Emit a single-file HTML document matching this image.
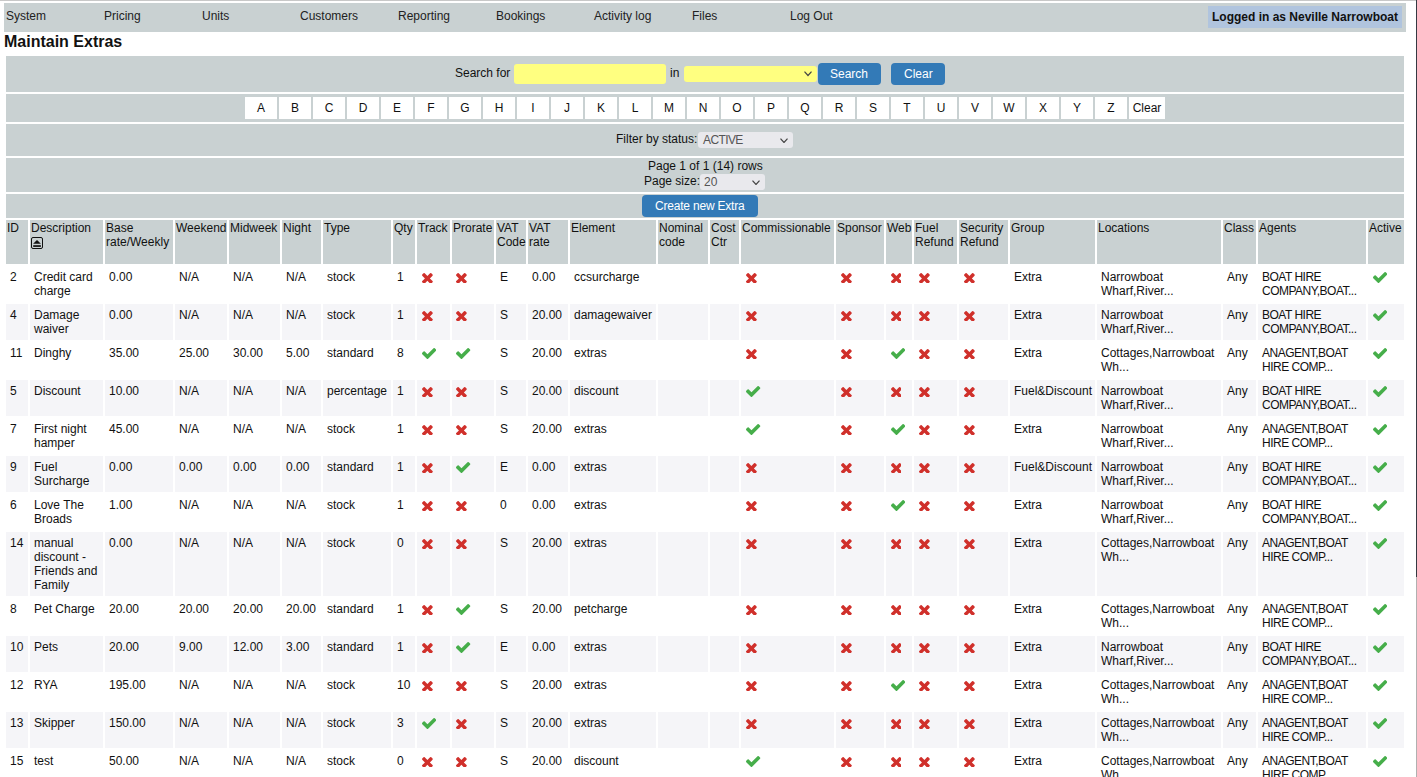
<!DOCTYPE html>
<html><head><meta charset="utf-8"><title>Maintain Extras</title>
<style>
html,body{margin:0;padding:0;background:#fff;}
body{width:1417px;height:777px;overflow:hidden;position:relative;font-family:"Liberation Sans",sans-serif;font-size:12px;color:#111;}
.a{position:absolute;}
.t{position:absolute;line-height:14px;white-space:nowrap;}
.g{background:#c9d1d2;}
.hd{position:absolute;background:#c9d1d2;box-sizing:border-box;padding:1px 1px;line-height:14px;white-space:nowrap;color:#111;}
.cd{position:absolute;box-sizing:border-box;padding:4px 4px;line-height:14px;white-space:nowrap;color:#111;}
.alt{background:#f5f5f8;}
.ic{position:absolute;}
.ej{position:absolute;left:1px;top:17px;}
.btn{position:absolute;background:#337ab7;border-radius:4px;color:#fff;}
.lt{position:absolute;background:#fff;width:32px;height:22px;text-align:center;line-height:14px;box-sizing:border-box;padding-top:4px;}
.sel{position:absolute;background:#e9e9ed;border-radius:3px;color:#555;}
</style></head><body>

<svg width='0' height='0' style='position:absolute'><defs><path id='ix' fill='#d0302b' d='M1298 1322q0 40-28 68l-136 136q-28 28-68 28t-68-28l-294-294-294 294q-28 28-68 28t-68-28l-136-136q-28-28-28-68t28-68l294-294-294-294q-28-28-28-68t28-68l136-136q28-28 68-28t68 28l294 294 294-294q28-28 68-28t68 28l136 136q28 28 28 68t-28 68l-294 294 294 294q28 28 28 68z'/><path id='ic' fill='#46ae4a' d='M1671 566q0 40-28 68l-724 724-136 136q-28 28-68 28t-68-28l-136-136-362-362q-28-28-28-68t28-68l136-136q28-28 68-28t68 28l294 295 656-657q28-28 68-28t68 28l136 136q28 28 28 68z'/></defs></svg>
<div class='a' style='left:0;top:0;width:1416px;height:1px;background:#c8c8c8'></div>
<div class='a' style='left:1416px;top:0;width:1px;height:577px;background:#353942'></div>
<div class='a' style='left:1416px;top:577px;width:1px;height:200px;background:#b0b0b0'></div>
<div class='a g' style='left:4px;top:3px;width:1402px;height:29px'></div>
<div class='t' style='left:6px;top:9px;color:#222'>System</div>
<div class='t' style='left:104px;top:9px;color:#222'>Pricing</div>
<div class='t' style='left:202px;top:9px;color:#222'>Units</div>
<div class='t' style='left:300px;top:9px;color:#222'>Customers</div>
<div class='t' style='left:398px;top:9px;color:#222'>Reporting</div>
<div class='t' style='left:496px;top:9px;color:#222'>Bookings</div>
<div class='t' style='left:594px;top:9px;color:#222'>Activity log</div>
<div class='t' style='left:692px;top:9px;color:#222'>Files</div>
<div class='t' style='left:790px;top:9px;color:#222'>Log Out</div>
<div class='a' style='left:1208px;top:6px;width:194px;height:22px;background:#b0c4de'></div>
<div class='t' style='left:1212px;top:10px;font-weight:bold;color:#111'>Logged in as Neville Narrowboat</div>
<div class='a' style='left:4px;top:32px;font-weight:bold;font-size:16px;line-height:19px;color:#111'>Maintain Extras</div>
<div class='a g' style='left:6px;top:56px;width:1398px;height:36px'></div>
<div class='a g' style='left:6px;top:94px;width:1398px;height:28px'></div>
<div class='a g' style='left:6px;top:124px;width:1398px;height:32px'></div>
<div class='a g' style='left:6px;top:158px;width:1398px;height:34px'></div>
<div class='a g' style='left:6px;top:194px;width:1398px;height:24px'></div>
<div class='t' style='left:455px;top:66px'>Search for</div>
<div class='a' style='left:514px;top:64px;width:152px;height:20px;background:#ffff80;border-radius:3px'></div>
<div class='t' style='left:670px;top:66px'>in</div>
<div class='a' style='left:684px;top:66px;width:133px;height:16px;background:#ffff80;border-radius:3px'></div>
<svg class='a' style='left:804.2px;top:71.3px' width='8' height='5.5' viewBox='0 0 8 5.5'><path d='M0.5 0.6L4 4.5L7.5 0.6' stroke='#444' stroke-width='1.2' fill='none'/></svg>
<div class='btn' style='left:818px;top:63px;width:63px;height:22px'></div>
<div class='t' style='left:830px;top:67px;color:#fff'>Search</div>
<div class='btn' style='left:891px;top:63px;width:54px;height:22px'></div>
<div class='t' style='left:904px;top:67px;color:#fff'>Clear</div>
<div class='lt' style='left:245px;top:97px'>A</div>
<div class='lt' style='left:279px;top:97px'>B</div>
<div class='lt' style='left:313px;top:97px'>C</div>
<div class='lt' style='left:347px;top:97px'>D</div>
<div class='lt' style='left:381px;top:97px'>E</div>
<div class='lt' style='left:415px;top:97px'>F</div>
<div class='lt' style='left:449px;top:97px'>G</div>
<div class='lt' style='left:483px;top:97px'>H</div>
<div class='lt' style='left:517px;top:97px'>I</div>
<div class='lt' style='left:551px;top:97px'>J</div>
<div class='lt' style='left:585px;top:97px'>K</div>
<div class='lt' style='left:619px;top:97px'>L</div>
<div class='lt' style='left:653px;top:97px'>M</div>
<div class='lt' style='left:687px;top:97px'>N</div>
<div class='lt' style='left:721px;top:97px'>O</div>
<div class='lt' style='left:755px;top:97px'>P</div>
<div class='lt' style='left:789px;top:97px'>Q</div>
<div class='lt' style='left:823px;top:97px'>R</div>
<div class='lt' style='left:857px;top:97px'>S</div>
<div class='lt' style='left:891px;top:97px'>T</div>
<div class='lt' style='left:925px;top:97px'>U</div>
<div class='lt' style='left:959px;top:97px'>V</div>
<div class='lt' style='left:993px;top:97px'>W</div>
<div class='lt' style='left:1027px;top:97px'>X</div>
<div class='lt' style='left:1061px;top:97px'>Y</div>
<div class='lt' style='left:1095px;top:97px'>Z</div>
<div class='lt' style='left:1129px;top:97px;width:36px'>Clear</div>
<div class='t' style='left:616px;top:132px'>Filter by status:</div>
<div class='sel' style='left:698px;top:132px;width:95px;height:16px'></div>
<div class='t' style='left:703px;top:133px;color:#555;letter-spacing:-0.6px'>ACTIVE</div>
<svg class='a' style='left:779.8px;top:137.6px' width='8' height='5.5' viewBox='0 0 8 5.5'><path d='M0.5 0.6L4 4.5L7.5 0.6' stroke='#444' stroke-width='1.2' fill='none'/></svg>
<div class='t' style='left:648px;top:159px'>Page 1 of 1 (14) rows</div>
<div class='t' style='left:644px;top:174px'>Page size:</div>
<div class='sel' style='left:700px;top:174px;width:65px;height:16px'></div>
<div class='t' style='left:704px;top:175px;color:#555'>20</div>
<svg class='a' style='left:752px;top:179.6px' width='8' height='5.5' viewBox='0 0 8 5.5'><path d='M0.5 0.6L4 4.5L7.5 0.6' stroke='#444' stroke-width='1.2' fill='none'/></svg>
<div class='btn' style='left:642px;top:195px;width:116px;height:22px'></div>
<div class='t' style='left:655px;top:199px;color:#fff;letter-spacing:-0.2px'>Create new Extra</div>
<div class='hd' style='left:6px;top:220px;width:22px;height:44px'>ID</div>
<div class='hd' style='left:30px;top:220px;width:73px;height:44px'>Description<br><svg class='ej' width='12' height='12' viewBox='0 0 12 12'><rect x='0.5' y='0.5' width='11' height='11' rx='1.5' fill='none' stroke='#111' stroke-width='1'/><path d='M2.1 6.7L6 3L9.9 6.7Z' fill='#111'/><rect x='2.2' y='8.2' width='7.7' height='1.7' fill='#111'/></svg></div>
<div class='hd' style='left:105px;top:220px;width:68px;height:44px'>Base<br>rate/Weekly</div>
<div class='hd' style='left:175px;top:220px;width:52px;height:44px'>Weekend</div>
<div class='hd' style='left:229px;top:220px;width:51px;height:44px'>Midweek</div>
<div class='hd' style='left:282px;top:220px;width:39px;height:44px'>Night</div>
<div class='hd' style='left:323px;top:220px;width:68px;height:44px'>Type</div>
<div class='hd' style='left:393px;top:220px;width:22px;height:44px'>Qty</div>
<div class='hd' style='left:417px;top:220px;width:33px;height:44px'>Track</div>
<div class='hd' style='left:452px;top:220px;width:42px;height:44px'>Prorate</div>
<div class='hd' style='left:496px;top:220px;width:30px;height:44px'>VAT<br>Code</div>
<div class='hd' style='left:528px;top:220px;width:40px;height:44px'>VAT<br>rate</div>
<div class='hd' style='left:570px;top:220px;width:86px;height:44px'>Element</div>
<div class='hd' style='left:658px;top:220px;width:50px;height:44px'>Nominal<br>code</div>
<div class='hd' style='left:710px;top:220px;width:29px;height:44px'>Cost<br>Ctr</div>
<div class='hd' style='left:741px;top:220px;width:93px;height:44px'>Commissionable</div>
<div class='hd' style='left:836px;top:220px;width:48px;height:44px'>Sponsor</div>
<div class='hd' style='left:886px;top:220px;width:26px;height:44px'>Web</div>
<div class='hd' style='left:914px;top:220px;width:43px;height:44px'>Fuel<br>Refund</div>
<div class='hd' style='left:959px;top:220px;width:49px;height:44px'>Security<br>Refund</div>
<div class='hd' style='left:1010px;top:220px;width:85px;height:44px'>Group</div>
<div class='hd' style='left:1097px;top:220px;width:124px;height:44px'>Locations</div>
<div class='hd' style='left:1223px;top:220px;width:33px;height:44px'>Class</div>
<div class='hd' style='left:1258px;top:220px;width:108px;height:44px'>Agents</div>
<div class='hd' style='left:1368px;top:220px;width:36px;height:44px'>Active</div>
<div class='cd' style='left:6px;top:266px;width:22px;height:36px'>2</div>
<div class='cd' style='left:30px;top:266px;width:73px;height:36px'>Credit card<br>charge</div>
<div class='cd' style='left:105px;top:266px;width:68px;height:36px'>0.00</div>
<div class='cd' style='left:175px;top:266px;width:52px;height:36px'>N/A</div>
<div class='cd' style='left:229px;top:266px;width:51px;height:36px'>N/A</div>
<div class='cd' style='left:282px;top:266px;width:39px;height:36px'>N/A</div>
<div class='cd' style='left:323px;top:266px;width:68px;height:36px'>stock</div>
<div class='cd' style='left:393px;top:266px;width:22px;height:36px'>1</div>
<div class='cd' style='left:417px;top:266px;width:33px;height:36px'><span class='ic' style='left:5.00px;top:6.6px'><svg style='display:block' width='10.8' height='10.8' viewBox='110 366 1188 1188'><use href='#ix'/></svg></span></div>
<div class='cd' style='left:452px;top:266px;width:42px;height:36px'><span class='ic' style='left:4.40px;top:6.6px'><svg style='display:block' width='10.8' height='10.8' viewBox='110 366 1188 1188'><use href='#ix'/></svg></span></div>
<div class='cd' style='left:496px;top:266px;width:30px;height:36px'>E</div>
<div class='cd' style='left:528px;top:266px;width:40px;height:36px'>0.00</div>
<div class='cd' style='left:570px;top:266px;width:86px;height:36px'>ccsurcharge</div>
<div class='cd' style='left:658px;top:266px;width:50px;height:36px'></div>
<div class='cd' style='left:710px;top:266px;width:29px;height:36px'></div>
<div class='cd' style='left:741px;top:266px;width:93px;height:36px'><span class='ic' style='left:5.25px;top:6.6px'><svg style='display:block' width='10.8' height='10.8' viewBox='110 366 1188 1188'><use href='#ix'/></svg></span></div>
<div class='cd' style='left:836px;top:266px;width:48px;height:36px'><span class='ic' style='left:5.20px;top:6.6px'><svg style='display:block' width='10.8' height='10.8' viewBox='110 366 1188 1188'><use href='#ix'/></svg></span></div>
<div class='cd' style='left:886px;top:266px;width:26px;height:36px'><span class='ic' style='left:4.70px;top:6.6px'><svg style='display:block' width='10.8' height='10.8' viewBox='110 366 1188 1188'><use href='#ix'/></svg></span></div>
<div class='cd' style='left:914px;top:266px;width:43px;height:36px'><span class='ic' style='left:5.47px;top:6.6px'><svg style='display:block' width='10.8' height='10.8' viewBox='110 366 1188 1188'><use href='#ix'/></svg></span></div>
<div class='cd' style='left:959px;top:266px;width:49px;height:36px'><span class='ic' style='left:5.20px;top:6.6px'><svg style='display:block' width='10.8' height='10.8' viewBox='110 366 1188 1188'><use href='#ix'/></svg></span></div>
<div class='cd' style='left:1010px;top:266px;width:85px;height:36px'>Extra</div>
<div class='cd' style='left:1097px;top:266px;width:124px;height:36px'>Narrowboat<br>Wharf,River...</div>
<div class='cd' style='left:1223px;top:266px;width:33px;height:36px'>Any</div>
<div class='cd' style='left:1258px;top:266px;width:108px;height:36px;letter-spacing:-0.5px'>BOAT HIRE<br>COMPANY,BOAT...</div>
<div class='cd' style='left:1368px;top:266px;width:36px;height:36px'><span class='ic' style='left:5.00px;top:5.9px'><svg style='display:block' width='14.3' height='11' viewBox='121 334 1550 1188'><use href='#ic'/></svg></span></div>
<div class='cd alt' style='left:6px;top:304px;width:22px;height:36px'>4</div>
<div class='cd alt' style='left:30px;top:304px;width:73px;height:36px'>Damage<br>waiver</div>
<div class='cd alt' style='left:105px;top:304px;width:68px;height:36px'>0.00</div>
<div class='cd alt' style='left:175px;top:304px;width:52px;height:36px'>N/A</div>
<div class='cd alt' style='left:229px;top:304px;width:51px;height:36px'>N/A</div>
<div class='cd alt' style='left:282px;top:304px;width:39px;height:36px'>N/A</div>
<div class='cd alt' style='left:323px;top:304px;width:68px;height:36px'>stock</div>
<div class='cd alt' style='left:393px;top:304px;width:22px;height:36px'>1</div>
<div class='cd alt' style='left:417px;top:304px;width:33px;height:36px'><span class='ic' style='left:5.00px;top:6.6px'><svg style='display:block' width='10.8' height='10.8' viewBox='110 366 1188 1188'><use href='#ix'/></svg></span></div>
<div class='cd alt' style='left:452px;top:304px;width:42px;height:36px'><span class='ic' style='left:4.40px;top:6.6px'><svg style='display:block' width='10.8' height='10.8' viewBox='110 366 1188 1188'><use href='#ix'/></svg></span></div>
<div class='cd alt' style='left:496px;top:304px;width:30px;height:36px'>S</div>
<div class='cd alt' style='left:528px;top:304px;width:40px;height:36px'>20.00</div>
<div class='cd alt' style='left:570px;top:304px;width:86px;height:36px'>damagewaiver</div>
<div class='cd alt' style='left:658px;top:304px;width:50px;height:36px'></div>
<div class='cd alt' style='left:710px;top:304px;width:29px;height:36px'></div>
<div class='cd alt' style='left:741px;top:304px;width:93px;height:36px'><span class='ic' style='left:5.25px;top:6.6px'><svg style='display:block' width='10.8' height='10.8' viewBox='110 366 1188 1188'><use href='#ix'/></svg></span></div>
<div class='cd alt' style='left:836px;top:304px;width:48px;height:36px'><span class='ic' style='left:5.20px;top:6.6px'><svg style='display:block' width='10.8' height='10.8' viewBox='110 366 1188 1188'><use href='#ix'/></svg></span></div>
<div class='cd alt' style='left:886px;top:304px;width:26px;height:36px'><span class='ic' style='left:4.70px;top:6.6px'><svg style='display:block' width='10.8' height='10.8' viewBox='110 366 1188 1188'><use href='#ix'/></svg></span></div>
<div class='cd alt' style='left:914px;top:304px;width:43px;height:36px'><span class='ic' style='left:5.47px;top:6.6px'><svg style='display:block' width='10.8' height='10.8' viewBox='110 366 1188 1188'><use href='#ix'/></svg></span></div>
<div class='cd alt' style='left:959px;top:304px;width:49px;height:36px'><span class='ic' style='left:5.20px;top:6.6px'><svg style='display:block' width='10.8' height='10.8' viewBox='110 366 1188 1188'><use href='#ix'/></svg></span></div>
<div class='cd alt' style='left:1010px;top:304px;width:85px;height:36px'>Extra</div>
<div class='cd alt' style='left:1097px;top:304px;width:124px;height:36px'>Narrowboat<br>Wharf,River...</div>
<div class='cd alt' style='left:1223px;top:304px;width:33px;height:36px'>Any</div>
<div class='cd alt' style='left:1258px;top:304px;width:108px;height:36px;letter-spacing:-0.5px'>BOAT HIRE<br>COMPANY,BOAT...</div>
<div class='cd alt' style='left:1368px;top:304px;width:36px;height:36px'><span class='ic' style='left:5.00px;top:5.9px'><svg style='display:block' width='14.3' height='11' viewBox='121 334 1550 1188'><use href='#ic'/></svg></span></div>
<div class='cd' style='left:6px;top:342px;width:22px;height:36px'>11</div>
<div class='cd' style='left:30px;top:342px;width:73px;height:36px'>Dinghy</div>
<div class='cd' style='left:105px;top:342px;width:68px;height:36px'>35.00</div>
<div class='cd' style='left:175px;top:342px;width:52px;height:36px'>25.00</div>
<div class='cd' style='left:229px;top:342px;width:51px;height:36px'>30.00</div>
<div class='cd' style='left:282px;top:342px;width:39px;height:36px'>5.00</div>
<div class='cd' style='left:323px;top:342px;width:68px;height:36px'>standard</div>
<div class='cd' style='left:393px;top:342px;width:22px;height:36px'>8</div>
<div class='cd' style='left:417px;top:342px;width:33px;height:36px'><span class='ic' style='left:5.00px;top:5.9px'><svg style='display:block' width='14.3' height='11' viewBox='121 334 1550 1188'><use href='#ic'/></svg></span></div>
<div class='cd' style='left:452px;top:342px;width:42px;height:36px'><span class='ic' style='left:4.40px;top:5.9px'><svg style='display:block' width='14.3' height='11' viewBox='121 334 1550 1188'><use href='#ic'/></svg></span></div>
<div class='cd' style='left:496px;top:342px;width:30px;height:36px'>S</div>
<div class='cd' style='left:528px;top:342px;width:40px;height:36px'>20.00</div>
<div class='cd' style='left:570px;top:342px;width:86px;height:36px'>extras</div>
<div class='cd' style='left:658px;top:342px;width:50px;height:36px'></div>
<div class='cd' style='left:710px;top:342px;width:29px;height:36px'></div>
<div class='cd' style='left:741px;top:342px;width:93px;height:36px'><span class='ic' style='left:5.25px;top:6.6px'><svg style='display:block' width='10.8' height='10.8' viewBox='110 366 1188 1188'><use href='#ix'/></svg></span></div>
<div class='cd' style='left:836px;top:342px;width:48px;height:36px'><span class='ic' style='left:5.20px;top:6.6px'><svg style='display:block' width='10.8' height='10.8' viewBox='110 366 1188 1188'><use href='#ix'/></svg></span></div>
<div class='cd' style='left:886px;top:342px;width:26px;height:36px'><span class='ic' style='left:4.70px;top:5.9px'><svg style='display:block' width='14.3' height='11' viewBox='121 334 1550 1188'><use href='#ic'/></svg></span></div>
<div class='cd' style='left:914px;top:342px;width:43px;height:36px'><span class='ic' style='left:5.47px;top:6.6px'><svg style='display:block' width='10.8' height='10.8' viewBox='110 366 1188 1188'><use href='#ix'/></svg></span></div>
<div class='cd' style='left:959px;top:342px;width:49px;height:36px'><span class='ic' style='left:5.20px;top:6.6px'><svg style='display:block' width='10.8' height='10.8' viewBox='110 366 1188 1188'><use href='#ix'/></svg></span></div>
<div class='cd' style='left:1010px;top:342px;width:85px;height:36px'>Extra</div>
<div class='cd' style='left:1097px;top:342px;width:124px;height:36px'>Cottages,Narrowboat<br>Wh...</div>
<div class='cd' style='left:1223px;top:342px;width:33px;height:36px'>Any</div>
<div class='cd' style='left:1258px;top:342px;width:108px;height:36px;letter-spacing:-0.5px'>ANAGENT,BOAT<br>HIRE COMP...</div>
<div class='cd' style='left:1368px;top:342px;width:36px;height:36px'><span class='ic' style='left:5.00px;top:5.9px'><svg style='display:block' width='14.3' height='11' viewBox='121 334 1550 1188'><use href='#ic'/></svg></span></div>
<div class='cd alt' style='left:6px;top:380px;width:22px;height:36px'>5</div>
<div class='cd alt' style='left:30px;top:380px;width:73px;height:36px'>Discount</div>
<div class='cd alt' style='left:105px;top:380px;width:68px;height:36px'>10.00</div>
<div class='cd alt' style='left:175px;top:380px;width:52px;height:36px'>N/A</div>
<div class='cd alt' style='left:229px;top:380px;width:51px;height:36px'>N/A</div>
<div class='cd alt' style='left:282px;top:380px;width:39px;height:36px'>N/A</div>
<div class='cd alt' style='left:323px;top:380px;width:68px;height:36px'>percentage</div>
<div class='cd alt' style='left:393px;top:380px;width:22px;height:36px'>1</div>
<div class='cd alt' style='left:417px;top:380px;width:33px;height:36px'><span class='ic' style='left:5.00px;top:6.6px'><svg style='display:block' width='10.8' height='10.8' viewBox='110 366 1188 1188'><use href='#ix'/></svg></span></div>
<div class='cd alt' style='left:452px;top:380px;width:42px;height:36px'><span class='ic' style='left:4.40px;top:6.6px'><svg style='display:block' width='10.8' height='10.8' viewBox='110 366 1188 1188'><use href='#ix'/></svg></span></div>
<div class='cd alt' style='left:496px;top:380px;width:30px;height:36px'>S</div>
<div class='cd alt' style='left:528px;top:380px;width:40px;height:36px'>20.00</div>
<div class='cd alt' style='left:570px;top:380px;width:86px;height:36px'>discount</div>
<div class='cd alt' style='left:658px;top:380px;width:50px;height:36px'></div>
<div class='cd alt' style='left:710px;top:380px;width:29px;height:36px'></div>
<div class='cd alt' style='left:741px;top:380px;width:93px;height:36px'><span class='ic' style='left:5.25px;top:5.9px'><svg style='display:block' width='14.3' height='11' viewBox='121 334 1550 1188'><use href='#ic'/></svg></span></div>
<div class='cd alt' style='left:836px;top:380px;width:48px;height:36px'><span class='ic' style='left:5.20px;top:6.6px'><svg style='display:block' width='10.8' height='10.8' viewBox='110 366 1188 1188'><use href='#ix'/></svg></span></div>
<div class='cd alt' style='left:886px;top:380px;width:26px;height:36px'><span class='ic' style='left:4.70px;top:6.6px'><svg style='display:block' width='10.8' height='10.8' viewBox='110 366 1188 1188'><use href='#ix'/></svg></span></div>
<div class='cd alt' style='left:914px;top:380px;width:43px;height:36px'><span class='ic' style='left:5.47px;top:6.6px'><svg style='display:block' width='10.8' height='10.8' viewBox='110 366 1188 1188'><use href='#ix'/></svg></span></div>
<div class='cd alt' style='left:959px;top:380px;width:49px;height:36px'><span class='ic' style='left:5.20px;top:6.6px'><svg style='display:block' width='10.8' height='10.8' viewBox='110 366 1188 1188'><use href='#ix'/></svg></span></div>
<div class='cd alt' style='left:1010px;top:380px;width:85px;height:36px'>Fuel&amp;Discount</div>
<div class='cd alt' style='left:1097px;top:380px;width:124px;height:36px'>Narrowboat<br>Wharf,River...</div>
<div class='cd alt' style='left:1223px;top:380px;width:33px;height:36px'>Any</div>
<div class='cd alt' style='left:1258px;top:380px;width:108px;height:36px;letter-spacing:-0.5px'>BOAT HIRE<br>COMPANY,BOAT...</div>
<div class='cd alt' style='left:1368px;top:380px;width:36px;height:36px'><span class='ic' style='left:5.00px;top:5.9px'><svg style='display:block' width='14.3' height='11' viewBox='121 334 1550 1188'><use href='#ic'/></svg></span></div>
<div class='cd' style='left:6px;top:418px;width:22px;height:36px'>7</div>
<div class='cd' style='left:30px;top:418px;width:73px;height:36px'>First night<br>hamper</div>
<div class='cd' style='left:105px;top:418px;width:68px;height:36px'>45.00</div>
<div class='cd' style='left:175px;top:418px;width:52px;height:36px'>N/A</div>
<div class='cd' style='left:229px;top:418px;width:51px;height:36px'>N/A</div>
<div class='cd' style='left:282px;top:418px;width:39px;height:36px'>N/A</div>
<div class='cd' style='left:323px;top:418px;width:68px;height:36px'>stock</div>
<div class='cd' style='left:393px;top:418px;width:22px;height:36px'>1</div>
<div class='cd' style='left:417px;top:418px;width:33px;height:36px'><span class='ic' style='left:5.00px;top:6.6px'><svg style='display:block' width='10.8' height='10.8' viewBox='110 366 1188 1188'><use href='#ix'/></svg></span></div>
<div class='cd' style='left:452px;top:418px;width:42px;height:36px'><span class='ic' style='left:4.40px;top:6.6px'><svg style='display:block' width='10.8' height='10.8' viewBox='110 366 1188 1188'><use href='#ix'/></svg></span></div>
<div class='cd' style='left:496px;top:418px;width:30px;height:36px'>S</div>
<div class='cd' style='left:528px;top:418px;width:40px;height:36px'>20.00</div>
<div class='cd' style='left:570px;top:418px;width:86px;height:36px'>extras</div>
<div class='cd' style='left:658px;top:418px;width:50px;height:36px'></div>
<div class='cd' style='left:710px;top:418px;width:29px;height:36px'></div>
<div class='cd' style='left:741px;top:418px;width:93px;height:36px'><span class='ic' style='left:5.25px;top:5.9px'><svg style='display:block' width='14.3' height='11' viewBox='121 334 1550 1188'><use href='#ic'/></svg></span></div>
<div class='cd' style='left:836px;top:418px;width:48px;height:36px'><span class='ic' style='left:5.20px;top:6.6px'><svg style='display:block' width='10.8' height='10.8' viewBox='110 366 1188 1188'><use href='#ix'/></svg></span></div>
<div class='cd' style='left:886px;top:418px;width:26px;height:36px'><span class='ic' style='left:4.70px;top:5.9px'><svg style='display:block' width='14.3' height='11' viewBox='121 334 1550 1188'><use href='#ic'/></svg></span></div>
<div class='cd' style='left:914px;top:418px;width:43px;height:36px'><span class='ic' style='left:5.47px;top:6.6px'><svg style='display:block' width='10.8' height='10.8' viewBox='110 366 1188 1188'><use href='#ix'/></svg></span></div>
<div class='cd' style='left:959px;top:418px;width:49px;height:36px'><span class='ic' style='left:5.20px;top:6.6px'><svg style='display:block' width='10.8' height='10.8' viewBox='110 366 1188 1188'><use href='#ix'/></svg></span></div>
<div class='cd' style='left:1010px;top:418px;width:85px;height:36px'>Extra</div>
<div class='cd' style='left:1097px;top:418px;width:124px;height:36px'>Narrowboat<br>Wharf,River...</div>
<div class='cd' style='left:1223px;top:418px;width:33px;height:36px'>Any</div>
<div class='cd' style='left:1258px;top:418px;width:108px;height:36px;letter-spacing:-0.5px'>ANAGENT,BOAT<br>HIRE COMP...</div>
<div class='cd' style='left:1368px;top:418px;width:36px;height:36px'><span class='ic' style='left:5.00px;top:5.9px'><svg style='display:block' width='14.3' height='11' viewBox='121 334 1550 1188'><use href='#ic'/></svg></span></div>
<div class='cd alt' style='left:6px;top:456px;width:22px;height:36px'>9</div>
<div class='cd alt' style='left:30px;top:456px;width:73px;height:36px'>Fuel<br>Surcharge</div>
<div class='cd alt' style='left:105px;top:456px;width:68px;height:36px'>0.00</div>
<div class='cd alt' style='left:175px;top:456px;width:52px;height:36px'>0.00</div>
<div class='cd alt' style='left:229px;top:456px;width:51px;height:36px'>0.00</div>
<div class='cd alt' style='left:282px;top:456px;width:39px;height:36px'>0.00</div>
<div class='cd alt' style='left:323px;top:456px;width:68px;height:36px'>standard</div>
<div class='cd alt' style='left:393px;top:456px;width:22px;height:36px'>1</div>
<div class='cd alt' style='left:417px;top:456px;width:33px;height:36px'><span class='ic' style='left:5.00px;top:6.6px'><svg style='display:block' width='10.8' height='10.8' viewBox='110 366 1188 1188'><use href='#ix'/></svg></span></div>
<div class='cd alt' style='left:452px;top:456px;width:42px;height:36px'><span class='ic' style='left:4.40px;top:5.9px'><svg style='display:block' width='14.3' height='11' viewBox='121 334 1550 1188'><use href='#ic'/></svg></span></div>
<div class='cd alt' style='left:496px;top:456px;width:30px;height:36px'>E</div>
<div class='cd alt' style='left:528px;top:456px;width:40px;height:36px'>0.00</div>
<div class='cd alt' style='left:570px;top:456px;width:86px;height:36px'>extras</div>
<div class='cd alt' style='left:658px;top:456px;width:50px;height:36px'></div>
<div class='cd alt' style='left:710px;top:456px;width:29px;height:36px'></div>
<div class='cd alt' style='left:741px;top:456px;width:93px;height:36px'><span class='ic' style='left:5.25px;top:6.6px'><svg style='display:block' width='10.8' height='10.8' viewBox='110 366 1188 1188'><use href='#ix'/></svg></span></div>
<div class='cd alt' style='left:836px;top:456px;width:48px;height:36px'><span class='ic' style='left:5.20px;top:6.6px'><svg style='display:block' width='10.8' height='10.8' viewBox='110 366 1188 1188'><use href='#ix'/></svg></span></div>
<div class='cd alt' style='left:886px;top:456px;width:26px;height:36px'><span class='ic' style='left:4.70px;top:6.6px'><svg style='display:block' width='10.8' height='10.8' viewBox='110 366 1188 1188'><use href='#ix'/></svg></span></div>
<div class='cd alt' style='left:914px;top:456px;width:43px;height:36px'><span class='ic' style='left:5.47px;top:6.6px'><svg style='display:block' width='10.8' height='10.8' viewBox='110 366 1188 1188'><use href='#ix'/></svg></span></div>
<div class='cd alt' style='left:959px;top:456px;width:49px;height:36px'><span class='ic' style='left:5.20px;top:6.6px'><svg style='display:block' width='10.8' height='10.8' viewBox='110 366 1188 1188'><use href='#ix'/></svg></span></div>
<div class='cd alt' style='left:1010px;top:456px;width:85px;height:36px'>Fuel&amp;Discount</div>
<div class='cd alt' style='left:1097px;top:456px;width:124px;height:36px'>Narrowboat<br>Wharf,River...</div>
<div class='cd alt' style='left:1223px;top:456px;width:33px;height:36px'>Any</div>
<div class='cd alt' style='left:1258px;top:456px;width:108px;height:36px;letter-spacing:-0.5px'>BOAT HIRE<br>COMPANY,BOAT...</div>
<div class='cd alt' style='left:1368px;top:456px;width:36px;height:36px'><span class='ic' style='left:5.00px;top:5.9px'><svg style='display:block' width='14.3' height='11' viewBox='121 334 1550 1188'><use href='#ic'/></svg></span></div>
<div class='cd' style='left:6px;top:494px;width:22px;height:36px'>6</div>
<div class='cd' style='left:30px;top:494px;width:73px;height:36px'>Love The<br>Broads</div>
<div class='cd' style='left:105px;top:494px;width:68px;height:36px'>1.00</div>
<div class='cd' style='left:175px;top:494px;width:52px;height:36px'>N/A</div>
<div class='cd' style='left:229px;top:494px;width:51px;height:36px'>N/A</div>
<div class='cd' style='left:282px;top:494px;width:39px;height:36px'>N/A</div>
<div class='cd' style='left:323px;top:494px;width:68px;height:36px'>stock</div>
<div class='cd' style='left:393px;top:494px;width:22px;height:36px'>1</div>
<div class='cd' style='left:417px;top:494px;width:33px;height:36px'><span class='ic' style='left:5.00px;top:6.6px'><svg style='display:block' width='10.8' height='10.8' viewBox='110 366 1188 1188'><use href='#ix'/></svg></span></div>
<div class='cd' style='left:452px;top:494px;width:42px;height:36px'><span class='ic' style='left:4.40px;top:6.6px'><svg style='display:block' width='10.8' height='10.8' viewBox='110 366 1188 1188'><use href='#ix'/></svg></span></div>
<div class='cd' style='left:496px;top:494px;width:30px;height:36px'>0</div>
<div class='cd' style='left:528px;top:494px;width:40px;height:36px'>0.00</div>
<div class='cd' style='left:570px;top:494px;width:86px;height:36px'>extras</div>
<div class='cd' style='left:658px;top:494px;width:50px;height:36px'></div>
<div class='cd' style='left:710px;top:494px;width:29px;height:36px'></div>
<div class='cd' style='left:741px;top:494px;width:93px;height:36px'><span class='ic' style='left:5.25px;top:6.6px'><svg style='display:block' width='10.8' height='10.8' viewBox='110 366 1188 1188'><use href='#ix'/></svg></span></div>
<div class='cd' style='left:836px;top:494px;width:48px;height:36px'><span class='ic' style='left:5.20px;top:6.6px'><svg style='display:block' width='10.8' height='10.8' viewBox='110 366 1188 1188'><use href='#ix'/></svg></span></div>
<div class='cd' style='left:886px;top:494px;width:26px;height:36px'><span class='ic' style='left:4.70px;top:5.9px'><svg style='display:block' width='14.3' height='11' viewBox='121 334 1550 1188'><use href='#ic'/></svg></span></div>
<div class='cd' style='left:914px;top:494px;width:43px;height:36px'><span class='ic' style='left:5.47px;top:6.6px'><svg style='display:block' width='10.8' height='10.8' viewBox='110 366 1188 1188'><use href='#ix'/></svg></span></div>
<div class='cd' style='left:959px;top:494px;width:49px;height:36px'><span class='ic' style='left:5.20px;top:6.6px'><svg style='display:block' width='10.8' height='10.8' viewBox='110 366 1188 1188'><use href='#ix'/></svg></span></div>
<div class='cd' style='left:1010px;top:494px;width:85px;height:36px'>Extra</div>
<div class='cd' style='left:1097px;top:494px;width:124px;height:36px'>Narrowboat<br>Wharf,River...</div>
<div class='cd' style='left:1223px;top:494px;width:33px;height:36px'>Any</div>
<div class='cd' style='left:1258px;top:494px;width:108px;height:36px;letter-spacing:-0.5px'>BOAT HIRE<br>COMPANY,BOAT...</div>
<div class='cd' style='left:1368px;top:494px;width:36px;height:36px'><span class='ic' style='left:5.00px;top:5.9px'><svg style='display:block' width='14.3' height='11' viewBox='121 334 1550 1188'><use href='#ic'/></svg></span></div>
<div class='cd alt' style='left:6px;top:532px;width:22px;height:64px'>14</div>
<div class='cd alt' style='left:30px;top:532px;width:73px;height:64px'>manual<br>discount -<br>Friends and<br>Family</div>
<div class='cd alt' style='left:105px;top:532px;width:68px;height:64px'>0.00</div>
<div class='cd alt' style='left:175px;top:532px;width:52px;height:64px'>N/A</div>
<div class='cd alt' style='left:229px;top:532px;width:51px;height:64px'>N/A</div>
<div class='cd alt' style='left:282px;top:532px;width:39px;height:64px'>N/A</div>
<div class='cd alt' style='left:323px;top:532px;width:68px;height:64px'>stock</div>
<div class='cd alt' style='left:393px;top:532px;width:22px;height:64px'>0</div>
<div class='cd alt' style='left:417px;top:532px;width:33px;height:64px'><span class='ic' style='left:5.00px;top:6.6px'><svg style='display:block' width='10.8' height='10.8' viewBox='110 366 1188 1188'><use href='#ix'/></svg></span></div>
<div class='cd alt' style='left:452px;top:532px;width:42px;height:64px'><span class='ic' style='left:4.40px;top:6.6px'><svg style='display:block' width='10.8' height='10.8' viewBox='110 366 1188 1188'><use href='#ix'/></svg></span></div>
<div class='cd alt' style='left:496px;top:532px;width:30px;height:64px'>S</div>
<div class='cd alt' style='left:528px;top:532px;width:40px;height:64px'>20.00</div>
<div class='cd alt' style='left:570px;top:532px;width:86px;height:64px'>extras</div>
<div class='cd alt' style='left:658px;top:532px;width:50px;height:64px'></div>
<div class='cd alt' style='left:710px;top:532px;width:29px;height:64px'></div>
<div class='cd alt' style='left:741px;top:532px;width:93px;height:64px'><span class='ic' style='left:5.25px;top:6.6px'><svg style='display:block' width='10.8' height='10.8' viewBox='110 366 1188 1188'><use href='#ix'/></svg></span></div>
<div class='cd alt' style='left:836px;top:532px;width:48px;height:64px'><span class='ic' style='left:5.20px;top:6.6px'><svg style='display:block' width='10.8' height='10.8' viewBox='110 366 1188 1188'><use href='#ix'/></svg></span></div>
<div class='cd alt' style='left:886px;top:532px;width:26px;height:64px'><span class='ic' style='left:4.70px;top:6.6px'><svg style='display:block' width='10.8' height='10.8' viewBox='110 366 1188 1188'><use href='#ix'/></svg></span></div>
<div class='cd alt' style='left:914px;top:532px;width:43px;height:64px'><span class='ic' style='left:5.47px;top:6.6px'><svg style='display:block' width='10.8' height='10.8' viewBox='110 366 1188 1188'><use href='#ix'/></svg></span></div>
<div class='cd alt' style='left:959px;top:532px;width:49px;height:64px'><span class='ic' style='left:5.20px;top:6.6px'><svg style='display:block' width='10.8' height='10.8' viewBox='110 366 1188 1188'><use href='#ix'/></svg></span></div>
<div class='cd alt' style='left:1010px;top:532px;width:85px;height:64px'>Extra</div>
<div class='cd alt' style='left:1097px;top:532px;width:124px;height:64px'>Cottages,Narrowboat<br>Wh...</div>
<div class='cd alt' style='left:1223px;top:532px;width:33px;height:64px'>Any</div>
<div class='cd alt' style='left:1258px;top:532px;width:108px;height:64px;letter-spacing:-0.5px'>ANAGENT,BOAT<br>HIRE COMP...</div>
<div class='cd alt' style='left:1368px;top:532px;width:36px;height:64px'><span class='ic' style='left:5.00px;top:5.9px'><svg style='display:block' width='14.3' height='11' viewBox='121 334 1550 1188'><use href='#ic'/></svg></span></div>
<div class='cd' style='left:6px;top:598px;width:22px;height:36px'>8</div>
<div class='cd' style='left:30px;top:598px;width:73px;height:36px'>Pet Charge</div>
<div class='cd' style='left:105px;top:598px;width:68px;height:36px'>20.00</div>
<div class='cd' style='left:175px;top:598px;width:52px;height:36px'>20.00</div>
<div class='cd' style='left:229px;top:598px;width:51px;height:36px'>20.00</div>
<div class='cd' style='left:282px;top:598px;width:39px;height:36px'>20.00</div>
<div class='cd' style='left:323px;top:598px;width:68px;height:36px'>standard</div>
<div class='cd' style='left:393px;top:598px;width:22px;height:36px'>1</div>
<div class='cd' style='left:417px;top:598px;width:33px;height:36px'><span class='ic' style='left:5.00px;top:6.6px'><svg style='display:block' width='10.8' height='10.8' viewBox='110 366 1188 1188'><use href='#ix'/></svg></span></div>
<div class='cd' style='left:452px;top:598px;width:42px;height:36px'><span class='ic' style='left:4.40px;top:5.9px'><svg style='display:block' width='14.3' height='11' viewBox='121 334 1550 1188'><use href='#ic'/></svg></span></div>
<div class='cd' style='left:496px;top:598px;width:30px;height:36px'>S</div>
<div class='cd' style='left:528px;top:598px;width:40px;height:36px'>20.00</div>
<div class='cd' style='left:570px;top:598px;width:86px;height:36px'>petcharge</div>
<div class='cd' style='left:658px;top:598px;width:50px;height:36px'></div>
<div class='cd' style='left:710px;top:598px;width:29px;height:36px'></div>
<div class='cd' style='left:741px;top:598px;width:93px;height:36px'><span class='ic' style='left:5.25px;top:6.6px'><svg style='display:block' width='10.8' height='10.8' viewBox='110 366 1188 1188'><use href='#ix'/></svg></span></div>
<div class='cd' style='left:836px;top:598px;width:48px;height:36px'><span class='ic' style='left:5.20px;top:6.6px'><svg style='display:block' width='10.8' height='10.8' viewBox='110 366 1188 1188'><use href='#ix'/></svg></span></div>
<div class='cd' style='left:886px;top:598px;width:26px;height:36px'><span class='ic' style='left:4.70px;top:6.6px'><svg style='display:block' width='10.8' height='10.8' viewBox='110 366 1188 1188'><use href='#ix'/></svg></span></div>
<div class='cd' style='left:914px;top:598px;width:43px;height:36px'><span class='ic' style='left:5.47px;top:6.6px'><svg style='display:block' width='10.8' height='10.8' viewBox='110 366 1188 1188'><use href='#ix'/></svg></span></div>
<div class='cd' style='left:959px;top:598px;width:49px;height:36px'><span class='ic' style='left:5.20px;top:6.6px'><svg style='display:block' width='10.8' height='10.8' viewBox='110 366 1188 1188'><use href='#ix'/></svg></span></div>
<div class='cd' style='left:1010px;top:598px;width:85px;height:36px'>Extra</div>
<div class='cd' style='left:1097px;top:598px;width:124px;height:36px'>Cottages,Narrowboat<br>Wh...</div>
<div class='cd' style='left:1223px;top:598px;width:33px;height:36px'>Any</div>
<div class='cd' style='left:1258px;top:598px;width:108px;height:36px;letter-spacing:-0.5px'>ANAGENT,BOAT<br>HIRE COMP...</div>
<div class='cd' style='left:1368px;top:598px;width:36px;height:36px'><span class='ic' style='left:5.00px;top:5.9px'><svg style='display:block' width='14.3' height='11' viewBox='121 334 1550 1188'><use href='#ic'/></svg></span></div>
<div class='cd alt' style='left:6px;top:636px;width:22px;height:36px'>10</div>
<div class='cd alt' style='left:30px;top:636px;width:73px;height:36px'>Pets</div>
<div class='cd alt' style='left:105px;top:636px;width:68px;height:36px'>20.00</div>
<div class='cd alt' style='left:175px;top:636px;width:52px;height:36px'>9.00</div>
<div class='cd alt' style='left:229px;top:636px;width:51px;height:36px'>12.00</div>
<div class='cd alt' style='left:282px;top:636px;width:39px;height:36px'>3.00</div>
<div class='cd alt' style='left:323px;top:636px;width:68px;height:36px'>standard</div>
<div class='cd alt' style='left:393px;top:636px;width:22px;height:36px'>1</div>
<div class='cd alt' style='left:417px;top:636px;width:33px;height:36px'><span class='ic' style='left:5.00px;top:6.6px'><svg style='display:block' width='10.8' height='10.8' viewBox='110 366 1188 1188'><use href='#ix'/></svg></span></div>
<div class='cd alt' style='left:452px;top:636px;width:42px;height:36px'><span class='ic' style='left:4.40px;top:5.9px'><svg style='display:block' width='14.3' height='11' viewBox='121 334 1550 1188'><use href='#ic'/></svg></span></div>
<div class='cd alt' style='left:496px;top:636px;width:30px;height:36px'>E</div>
<div class='cd alt' style='left:528px;top:636px;width:40px;height:36px'>0.00</div>
<div class='cd alt' style='left:570px;top:636px;width:86px;height:36px'>extras</div>
<div class='cd alt' style='left:658px;top:636px;width:50px;height:36px'></div>
<div class='cd alt' style='left:710px;top:636px;width:29px;height:36px'></div>
<div class='cd alt' style='left:741px;top:636px;width:93px;height:36px'><span class='ic' style='left:5.25px;top:6.6px'><svg style='display:block' width='10.8' height='10.8' viewBox='110 366 1188 1188'><use href='#ix'/></svg></span></div>
<div class='cd alt' style='left:836px;top:636px;width:48px;height:36px'><span class='ic' style='left:5.20px;top:6.6px'><svg style='display:block' width='10.8' height='10.8' viewBox='110 366 1188 1188'><use href='#ix'/></svg></span></div>
<div class='cd alt' style='left:886px;top:636px;width:26px;height:36px'><span class='ic' style='left:4.70px;top:6.6px'><svg style='display:block' width='10.8' height='10.8' viewBox='110 366 1188 1188'><use href='#ix'/></svg></span></div>
<div class='cd alt' style='left:914px;top:636px;width:43px;height:36px'><span class='ic' style='left:5.47px;top:6.6px'><svg style='display:block' width='10.8' height='10.8' viewBox='110 366 1188 1188'><use href='#ix'/></svg></span></div>
<div class='cd alt' style='left:959px;top:636px;width:49px;height:36px'><span class='ic' style='left:5.20px;top:6.6px'><svg style='display:block' width='10.8' height='10.8' viewBox='110 366 1188 1188'><use href='#ix'/></svg></span></div>
<div class='cd alt' style='left:1010px;top:636px;width:85px;height:36px'>Extra</div>
<div class='cd alt' style='left:1097px;top:636px;width:124px;height:36px'>Narrowboat<br>Wharf,River...</div>
<div class='cd alt' style='left:1223px;top:636px;width:33px;height:36px'>Any</div>
<div class='cd alt' style='left:1258px;top:636px;width:108px;height:36px;letter-spacing:-0.5px'>BOAT HIRE<br>COMPANY,BOAT...</div>
<div class='cd alt' style='left:1368px;top:636px;width:36px;height:36px'><span class='ic' style='left:5.00px;top:5.9px'><svg style='display:block' width='14.3' height='11' viewBox='121 334 1550 1188'><use href='#ic'/></svg></span></div>
<div class='cd' style='left:6px;top:674px;width:22px;height:36px'>12</div>
<div class='cd' style='left:30px;top:674px;width:73px;height:36px'>RYA</div>
<div class='cd' style='left:105px;top:674px;width:68px;height:36px'>195.00</div>
<div class='cd' style='left:175px;top:674px;width:52px;height:36px'>N/A</div>
<div class='cd' style='left:229px;top:674px;width:51px;height:36px'>N/A</div>
<div class='cd' style='left:282px;top:674px;width:39px;height:36px'>N/A</div>
<div class='cd' style='left:323px;top:674px;width:68px;height:36px'>stock</div>
<div class='cd' style='left:393px;top:674px;width:22px;height:36px'>10</div>
<div class='cd' style='left:417px;top:674px;width:33px;height:36px'><span class='ic' style='left:5.00px;top:6.6px'><svg style='display:block' width='10.8' height='10.8' viewBox='110 366 1188 1188'><use href='#ix'/></svg></span></div>
<div class='cd' style='left:452px;top:674px;width:42px;height:36px'><span class='ic' style='left:4.40px;top:6.6px'><svg style='display:block' width='10.8' height='10.8' viewBox='110 366 1188 1188'><use href='#ix'/></svg></span></div>
<div class='cd' style='left:496px;top:674px;width:30px;height:36px'>S</div>
<div class='cd' style='left:528px;top:674px;width:40px;height:36px'>20.00</div>
<div class='cd' style='left:570px;top:674px;width:86px;height:36px'>extras</div>
<div class='cd' style='left:658px;top:674px;width:50px;height:36px'></div>
<div class='cd' style='left:710px;top:674px;width:29px;height:36px'></div>
<div class='cd' style='left:741px;top:674px;width:93px;height:36px'><span class='ic' style='left:5.25px;top:6.6px'><svg style='display:block' width='10.8' height='10.8' viewBox='110 366 1188 1188'><use href='#ix'/></svg></span></div>
<div class='cd' style='left:836px;top:674px;width:48px;height:36px'><span class='ic' style='left:5.20px;top:6.6px'><svg style='display:block' width='10.8' height='10.8' viewBox='110 366 1188 1188'><use href='#ix'/></svg></span></div>
<div class='cd' style='left:886px;top:674px;width:26px;height:36px'><span class='ic' style='left:4.70px;top:5.9px'><svg style='display:block' width='14.3' height='11' viewBox='121 334 1550 1188'><use href='#ic'/></svg></span></div>
<div class='cd' style='left:914px;top:674px;width:43px;height:36px'><span class='ic' style='left:5.47px;top:6.6px'><svg style='display:block' width='10.8' height='10.8' viewBox='110 366 1188 1188'><use href='#ix'/></svg></span></div>
<div class='cd' style='left:959px;top:674px;width:49px;height:36px'><span class='ic' style='left:5.20px;top:6.6px'><svg style='display:block' width='10.8' height='10.8' viewBox='110 366 1188 1188'><use href='#ix'/></svg></span></div>
<div class='cd' style='left:1010px;top:674px;width:85px;height:36px'>Extra</div>
<div class='cd' style='left:1097px;top:674px;width:124px;height:36px'>Cottages,Narrowboat<br>Wh...</div>
<div class='cd' style='left:1223px;top:674px;width:33px;height:36px'>Any</div>
<div class='cd' style='left:1258px;top:674px;width:108px;height:36px;letter-spacing:-0.5px'>ANAGENT,BOAT<br>HIRE COMP...</div>
<div class='cd' style='left:1368px;top:674px;width:36px;height:36px'><span class='ic' style='left:5.00px;top:5.9px'><svg style='display:block' width='14.3' height='11' viewBox='121 334 1550 1188'><use href='#ic'/></svg></span></div>
<div class='cd alt' style='left:6px;top:712px;width:22px;height:36px'>13</div>
<div class='cd alt' style='left:30px;top:712px;width:73px;height:36px'>Skipper</div>
<div class='cd alt' style='left:105px;top:712px;width:68px;height:36px'>150.00</div>
<div class='cd alt' style='left:175px;top:712px;width:52px;height:36px'>N/A</div>
<div class='cd alt' style='left:229px;top:712px;width:51px;height:36px'>N/A</div>
<div class='cd alt' style='left:282px;top:712px;width:39px;height:36px'>N/A</div>
<div class='cd alt' style='left:323px;top:712px;width:68px;height:36px'>stock</div>
<div class='cd alt' style='left:393px;top:712px;width:22px;height:36px'>3</div>
<div class='cd alt' style='left:417px;top:712px;width:33px;height:36px'><span class='ic' style='left:5.00px;top:5.9px'><svg style='display:block' width='14.3' height='11' viewBox='121 334 1550 1188'><use href='#ic'/></svg></span></div>
<div class='cd alt' style='left:452px;top:712px;width:42px;height:36px'><span class='ic' style='left:4.40px;top:6.6px'><svg style='display:block' width='10.8' height='10.8' viewBox='110 366 1188 1188'><use href='#ix'/></svg></span></div>
<div class='cd alt' style='left:496px;top:712px;width:30px;height:36px'>S</div>
<div class='cd alt' style='left:528px;top:712px;width:40px;height:36px'>20.00</div>
<div class='cd alt' style='left:570px;top:712px;width:86px;height:36px'>extras</div>
<div class='cd alt' style='left:658px;top:712px;width:50px;height:36px'></div>
<div class='cd alt' style='left:710px;top:712px;width:29px;height:36px'></div>
<div class='cd alt' style='left:741px;top:712px;width:93px;height:36px'><span class='ic' style='left:5.25px;top:6.6px'><svg style='display:block' width='10.8' height='10.8' viewBox='110 366 1188 1188'><use href='#ix'/></svg></span></div>
<div class='cd alt' style='left:836px;top:712px;width:48px;height:36px'><span class='ic' style='left:5.20px;top:6.6px'><svg style='display:block' width='10.8' height='10.8' viewBox='110 366 1188 1188'><use href='#ix'/></svg></span></div>
<div class='cd alt' style='left:886px;top:712px;width:26px;height:36px'><span class='ic' style='left:4.70px;top:6.6px'><svg style='display:block' width='10.8' height='10.8' viewBox='110 366 1188 1188'><use href='#ix'/></svg></span></div>
<div class='cd alt' style='left:914px;top:712px;width:43px;height:36px'><span class='ic' style='left:5.47px;top:6.6px'><svg style='display:block' width='10.8' height='10.8' viewBox='110 366 1188 1188'><use href='#ix'/></svg></span></div>
<div class='cd alt' style='left:959px;top:712px;width:49px;height:36px'><span class='ic' style='left:5.20px;top:6.6px'><svg style='display:block' width='10.8' height='10.8' viewBox='110 366 1188 1188'><use href='#ix'/></svg></span></div>
<div class='cd alt' style='left:1010px;top:712px;width:85px;height:36px'>Extra</div>
<div class='cd alt' style='left:1097px;top:712px;width:124px;height:36px'>Cottages,Narrowboat<br>Wh...</div>
<div class='cd alt' style='left:1223px;top:712px;width:33px;height:36px'>Any</div>
<div class='cd alt' style='left:1258px;top:712px;width:108px;height:36px;letter-spacing:-0.5px'>ANAGENT,BOAT<br>HIRE COMP...</div>
<div class='cd alt' style='left:1368px;top:712px;width:36px;height:36px'><span class='ic' style='left:5.00px;top:5.9px'><svg style='display:block' width='14.3' height='11' viewBox='121 334 1550 1188'><use href='#ic'/></svg></span></div>
<div class='cd' style='left:6px;top:750px;width:22px;height:36px'>15</div>
<div class='cd' style='left:30px;top:750px;width:73px;height:36px'>test</div>
<div class='cd' style='left:105px;top:750px;width:68px;height:36px'>50.00</div>
<div class='cd' style='left:175px;top:750px;width:52px;height:36px'>N/A</div>
<div class='cd' style='left:229px;top:750px;width:51px;height:36px'>N/A</div>
<div class='cd' style='left:282px;top:750px;width:39px;height:36px'>N/A</div>
<div class='cd' style='left:323px;top:750px;width:68px;height:36px'>stock</div>
<div class='cd' style='left:393px;top:750px;width:22px;height:36px'>0</div>
<div class='cd' style='left:417px;top:750px;width:33px;height:36px'><span class='ic' style='left:5.00px;top:6.6px'><svg style='display:block' width='10.8' height='10.8' viewBox='110 366 1188 1188'><use href='#ix'/></svg></span></div>
<div class='cd' style='left:452px;top:750px;width:42px;height:36px'><span class='ic' style='left:4.40px;top:6.6px'><svg style='display:block' width='10.8' height='10.8' viewBox='110 366 1188 1188'><use href='#ix'/></svg></span></div>
<div class='cd' style='left:496px;top:750px;width:30px;height:36px'>S</div>
<div class='cd' style='left:528px;top:750px;width:40px;height:36px'>20.00</div>
<div class='cd' style='left:570px;top:750px;width:86px;height:36px'>discount</div>
<div class='cd' style='left:658px;top:750px;width:50px;height:36px'></div>
<div class='cd' style='left:710px;top:750px;width:29px;height:36px'></div>
<div class='cd' style='left:741px;top:750px;width:93px;height:36px'><span class='ic' style='left:5.25px;top:5.9px'><svg style='display:block' width='14.3' height='11' viewBox='121 334 1550 1188'><use href='#ic'/></svg></span></div>
<div class='cd' style='left:836px;top:750px;width:48px;height:36px'><span class='ic' style='left:5.20px;top:6.6px'><svg style='display:block' width='10.8' height='10.8' viewBox='110 366 1188 1188'><use href='#ix'/></svg></span></div>
<div class='cd' style='left:886px;top:750px;width:26px;height:36px'><span class='ic' style='left:4.70px;top:6.6px'><svg style='display:block' width='10.8' height='10.8' viewBox='110 366 1188 1188'><use href='#ix'/></svg></span></div>
<div class='cd' style='left:914px;top:750px;width:43px;height:36px'><span class='ic' style='left:5.47px;top:6.6px'><svg style='display:block' width='10.8' height='10.8' viewBox='110 366 1188 1188'><use href='#ix'/></svg></span></div>
<div class='cd' style='left:959px;top:750px;width:49px;height:36px'><span class='ic' style='left:5.20px;top:6.6px'><svg style='display:block' width='10.8' height='10.8' viewBox='110 366 1188 1188'><use href='#ix'/></svg></span></div>
<div class='cd' style='left:1010px;top:750px;width:85px;height:36px'>Extra</div>
<div class='cd' style='left:1097px;top:750px;width:124px;height:36px'>Cottages,Narrowboat<br>Wh...</div>
<div class='cd' style='left:1223px;top:750px;width:33px;height:36px'>Any</div>
<div class='cd' style='left:1258px;top:750px;width:108px;height:36px;letter-spacing:-0.5px'>ANAGENT,BOAT<br>HIRE COMP...</div>
<div class='cd' style='left:1368px;top:750px;width:36px;height:36px'><span class='ic' style='left:5.00px;top:5.9px'><svg style='display:block' width='14.3' height='11' viewBox='121 334 1550 1188'><use href='#ic'/></svg></span></div>
</body></html>
